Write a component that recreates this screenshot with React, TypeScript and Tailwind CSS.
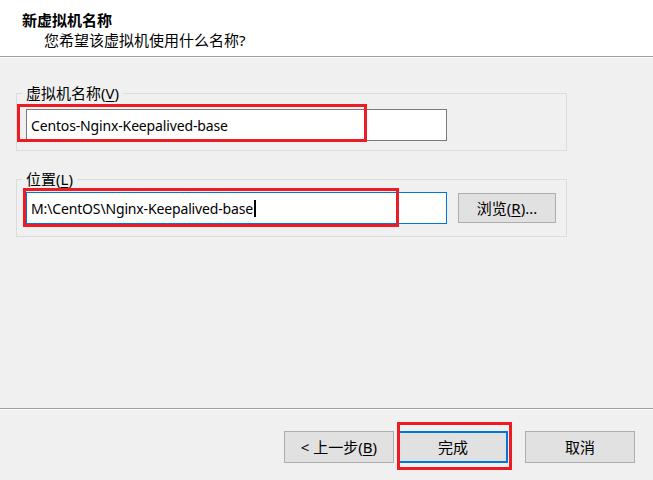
import React from "react";

const font = { fontFamily: "'Noto Sans', 'Noto Sans CJK SC', sans-serif" };

function Btn({ children, focused = false, className = "" }: { children: React.ReactNode; focused?: boolean; className?: string }) {
  return (
    <div
      className={
        "flex h-[32px] w-[110px] items-center justify-center bg-[#e1e1e1] text-[15px] leading-none text-black " +
        (focused ? "border-2 border-[#0078d7] " : "border border-[#adadad] ") +
        className
      }
    >
      {children}
    </div>
  );
}

export default function App() {
  return (
    <div className="relative flex h-[480px] w-[653px] flex-col overflow-hidden bg-[#f0f0f0] text-black" style={font}>
      {/* Header */}
      <div className="h-[57px] border-b border-[#a0a0a0] bg-white pl-[22px] pt-[10px] text-[15px] leading-[20px]">
        <div className="font-bold">新虚拟机名称</div>
        <div className="pl-[22px]">您希望该虚拟机使用什么名称?</div>
      </div>
      <div className="h-px bg-white" />

      {/* Body */}
      <div className="flex flex-1 flex-col pl-[16px] pt-[35px]">
        <div className="relative w-[551px] border border-[#dcdcdc] pb-[9px] pl-[9px] pt-[15px]">
          <div className="absolute -top-[11px] left-[5px] bg-[#f0f0f0] px-[4px] text-[15px] leading-[20px]">
            虚拟机名称(<span className="underline underline-offset-2">V</span>)
          </div>
          <div className="flex h-[32px] w-[421px] items-center border border-[#7a7a7a] bg-white pl-[4px] text-[14px] tracking-[-0.15px]">
            Centos-Nginx-Keepalived-base
          </div>
        </div>

        <div className="relative mt-[28px] w-[551px] border border-[#dcdcdc] pb-[12px] pl-[9px] pt-[12px]">
          <div className="absolute -top-[11px] left-[5px] bg-[#f0f0f0] px-[4px] text-[15px] leading-[20px]">
            位置(<span className="underline underline-offset-2">L</span>)
          </div>
          <div className="flex items-center gap-[11px]">
            <div className="flex h-[32px] w-[421px] items-center border border-[#0078d7] bg-white pl-[4px] text-[14px] tracking-[-0.15px]">
              <span>M:\CentOS\Nginx-Keepalived-base</span>
              <span className="ml-[1px] inline-block h-[17px] w-[2px] bg-black" />
            </div>
            <div className="flex h-[30px] w-[98px] items-center justify-center border border-[#adadad] bg-[#e1e1e1] text-[15px]">
              浏览(<span className="underline underline-offset-2">R</span>)...
            </div>
          </div>
        </div>
      </div>

      {/* Footer */}
      <div className="border-t border-[#a0a0a0]" />
      <div className="h-px bg-white" />
      <div className="flex items-center pb-[17px] pl-[284px] pt-[21px]">
        <Btn>
          &lt; 上一步(<span className="underline underline-offset-2">B</span>)
        </Btn>
        <Btn focused className="ml-[4px]">完成</Btn>
        <Btn className="ml-[17px]">取消</Btn>
      </div>

      {/* Red annotation boxes */}
      <div className="pointer-events-none absolute left-[17px] top-[104px] h-[38px] w-[350px] border-[3px] border-[#ed1c24]" />
      <div className="pointer-events-none absolute left-[23px] top-[188px] h-[39px] w-[376px] border-[3px] border-[#ed1c24]" />
      <div className="pointer-events-none absolute left-[397px] top-[422px] h-[48px] w-[115px] border-[3px] border-[#ed1c24]" />
    </div>
  );
}
